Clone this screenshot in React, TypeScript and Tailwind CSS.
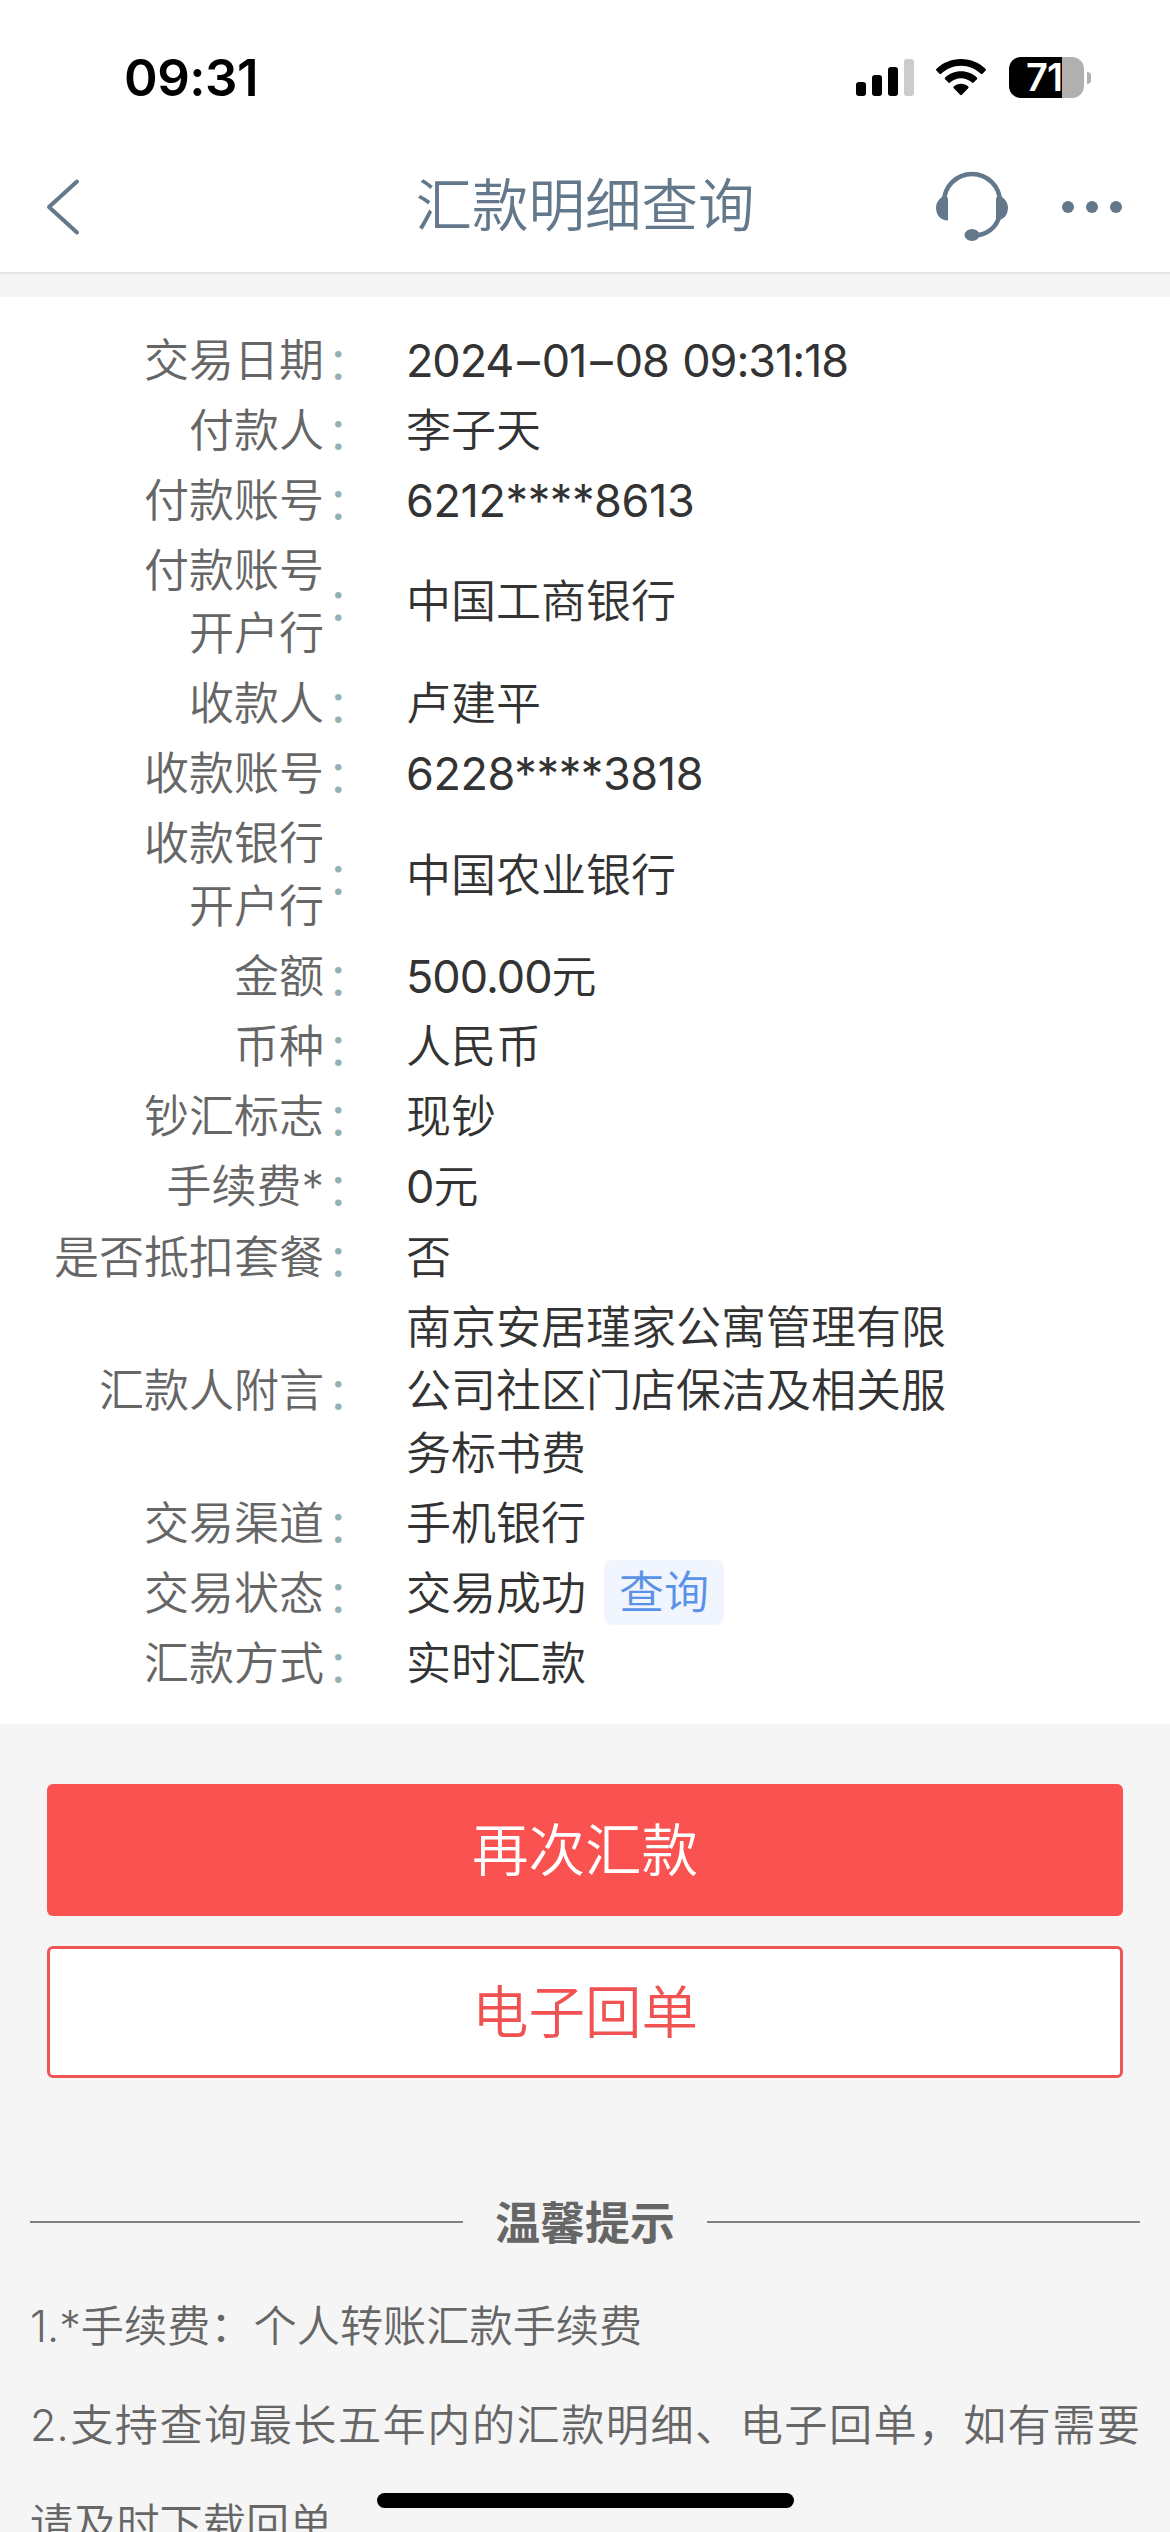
import React from 'react';

interface DetailRow {
  label: string[];
  value: React.ReactNode[];
  action?: string;
}

const rows: DetailRow[] = [
  {
    label: ['交易日期'],
    value: [
      <span key="date" className="font-normal tracking-[-1.1px] [word-spacing:2px]">
        2024<span className="tracking-[2px] pl-[4px]">–</span>01<span className="tracking-[2px] pl-[4px]">–</span>08 09:31:18
      </span>,
    ],
  },
  { label: ['付款人'], value: ['李子天'] },
  { label: ['付款账号'], value: [<span key="payer" className="font-normal tracking-[-0.4px]">6212****8613</span>] },
  { label: ['付款账号', '开户行'], value: ['中国工商银行'] },
  { label: ['收款人'], value: ['卢建平'] },
  { label: ['收款账号'], value: [<span key="payee" className="font-normal tracking-[-0.4px]">6228****3818</span>] },
  { label: ['收款银行', '开户行'], value: ['中国农业银行'] },
  { label: ['金额'], value: [<><span className="font-normal tracking-[-1px]">500.00</span>元</>] },
  { label: ['币种'], value: ['人民币'] },
  { label: ['钞汇标志'], value: ['现钞'] },
  { label: ['手续费*'], value: [<><span className="font-normal tracking-[-1px]">0</span>元</>] },
  { label: ['是否抵扣套餐'], value: ['否'] },
  { label: ['汇款人附言'], value: ['南京安居瑾家公寓管理有限', '公司社区门店保洁及相关服', '务标书费'] },
  { label: ['交易渠道'], value: ['手机银行'] },
  { label: ['交易状态'], value: ['交易成功'], action: '查询' },
  { label: ['汇款方式'], value: ['实时汇款'] },
];

function StatusBar() {
  return (
    <div className="h-[156px] flex items-start justify-between pl-[124px] pr-[79px] pt-[57px]">
      <span className="text-[51px] leading-[42px] font-semibold text-black tracking-[-0.5px]">09:31</span>
      <div className="flex items-start">
        <svg className="w-[58px] h-[41px]" viewBox="0 0 58 41">
          <rect x="0" y="25" width="10" height="14" rx="3" />
          <rect x="16" y="18" width="10" height="21" rx="3" />
          <rect x="32" y="10" width="10" height="29" rx="3" />
          <rect x="48" y="2" width="10" height="37" rx="3" fill="#cccccc" />
        </svg>
        <svg className="w-[50px] h-[41px] ml-[22px]" viewBox="0 0 50 41">
          <path d="M25 2C34.8 2 43.4 5.8 49.6 11.9a1.2 1.2 0 0 1 0 1.7l-3.1 3.2a1.2 1.2 0 0 1-1.7 0C39.6 11.8 32.7 8.8 25 8.8S10.400 11.8 5.200 16.8a1.2 1.2 0 0 1-1.7 0L.4 13.600a1.2 1.2 0 0 1 0-1.7C6.600 5.800 15.200 2 25 2z" />
          <path d="M25 14.300c6.200 0 11.800 2.400 15.900 6.200a1.200 1.200 0 0 1 0 1.700l-3.300 3.300a1.200 1.200 0 0 1-1.700 0c-2.900-2.700-6.700-4.300-10.900-4.300s-8 1.600-10.900 4.300a1.200 1.200 0 0 1-1.700 0l-3.300-3.300a1.200 1.200 0 0 1 0-1.700C13.200 16.700 18.800 14.300 25 14.300z" />
          <path d="M25 26.700c2.800 0 5.300 1 7.200 2.700a1.200 1.200 0 0 1 0 1.800l-6.300 6.600a1.300 1.300 0 0 1-1.800 0l-6.300-6.600a1.200 1.200 0 0 1 0-1.800c1.900-1.700 4.400-2.700 7.200-2.700z" />
        </svg>
        <div className="ml-[23px] flex items-center">
          <div className="w-[75px] h-[41px] rounded-[12px] bg-[linear-gradient(to_right,#000_53px,#b0b0b0_53px)] pl-[17px]">
            <span className="block text-[38px] leading-[41px] font-semibold text-white tracking-[-1px]">71</span>
          </div>
          <div className="ml-[3px] w-[4px] h-[12px] rounded-r-full bg-[#b0b0b0]" />
        </div>
      </div>
    </div>
  );
}

function NavBar() {
  return (
    <div className="h-[118px] border-b-2 border-[#e6e6e6] grid grid-cols-[1fr_auto_1fr] items-start text-[#63788a]">
      <svg className="w-[36px] h-[60px] ml-[45px] mt-[21px]" viewBox="0 0 36 60" fill="none" stroke="currentColor" strokeWidth="4" strokeLinecap="round" strokeLinejoin="round">
        <path d="M32 4.500L4 30L32 55.500" />
      </svg>
      <h1 className="text-[56.500px] leading-[80px] mt-[10px]">汇款明细查询</h1>
      <div className="flex items-start justify-end pr-[48px]">
        <svg className="w-[72px] h-[72px] mt-[15px]" viewBox="0 0 72 72" fill="none">
          <path d="M8 32v-1a28 28 0 0 1 56 0v8c0 13-9 24-24 25.500" stroke="currentColor" strokeWidth="4.500" />
          <path d="M12 28v21.500c-7 0-12-5-12-13 0-5 4-10 8-11.500a3 3 0 0 1 4 3z" fill="currentColor" />
          <path d="M60 28v21.500c7 0 12-5 12-13 0-5-4-10-8-11.500a3 3 0 0 0-4 3z" fill="currentColor" />
          <ellipse cx="36" cy="64" rx="7.500" ry="6" fill="currentColor" />
        </svg>
        <svg className="w-[60px] h-[12px] ml-[54px] mt-[45px]" viewBox="0 0 60 12" fill="currentColor">
          <circle cx="6" cy="6" r="6" />
          <circle cx="30" cy="6" r="6" />
          <circle cx="54" cy="6" r="6" />
        </svg>
      </div>
    </div>
  );
}

function Row({ row }: { row: DetailRow }) {
  return (
    <div className="flex items-center py-[3.550px] text-[45px] leading-[63px]">
      <div className="w-[324px] text-right text-[#666666]">
        {row.label.map((line) => (
          <div key={line}>{line}</div>
        ))}
      </div>
      <span className="w-[82px] pl-[3px] pt-[3px] -mb-[3px] text-[#93b3b3]">：</span>
      <div className="text-[#333333] whitespace-nowrap">
        {row.value.map((line, i) => (
          <div key={i}>{line}</div>
        ))}
      </div>
      {row.action && (
        <button className="ml-[18px] -mt-[5px] -mb-[3px] px-[15px] pt-px h-[65px] rounded-[8px] bg-[#f1f5fe] text-[#5a92e8]">
          {row.action}
        </button>
      )}
    </div>
  );
}

export default function App() {
  return (
    <div lang="zh-CN" className="relative w-[1170px] h-[2532px] overflow-hidden bg-[#f5f5f5] font-['Inter','Noto_Sans_CJK_SC',sans-serif] font-[350]">
      <header className="bg-white">
        <StatusBar />
        <NavBar />
      </header>

      {/* Transfer details */}
      <section className="mt-[23px] h-[1427px] bg-white pt-[28px]">
        {rows.map((row, i) => (
          <Row key={i} row={row} />
        ))}
      </section>

      {/* Actions */}
      <div className="mt-[60px] px-[47px] flex flex-col gap-[30px] text-[56.500px]">
        <button className="h-[132px] pt-[3px] rounded-[6px] bg-[#fa5151] text-white">再次汇款</button>
        <button className="h-[132px] pt-[3px] rounded-[6px] border-[3px] border-[#ee5555] bg-white text-[#f05252]">电子回单</button>
      </div>

      {/* Tips */}
      <section className="mt-[112px] px-[30px] text-[#666666]">
        <div className="flex items-center gap-[32px]">
          <div className="flex-1 h-[2px] bg-[#808080]" />
          <h2 className="text-[45px] leading-[60px] pt-[4px] font-bold">温馨提示</h2>
          <div className="flex-1 h-[2px] bg-[#808080]" />
        </div>
        <div className="mt-[23px] text-[43.200px] leading-[99px]">
          <p>1.*手续费：个人转账汇款手续费</p>
          <p className="text-justify">2.支持查询最长五年内的汇款明细、电子回单，如有需要请及时下载回单</p>
        </div>
      </section>

      {/* Home indicator */}
      <div className="absolute left-[377px] top-[2493px] w-[417px] h-[15px] rounded-full bg-black" />
    </div>
  );
}
